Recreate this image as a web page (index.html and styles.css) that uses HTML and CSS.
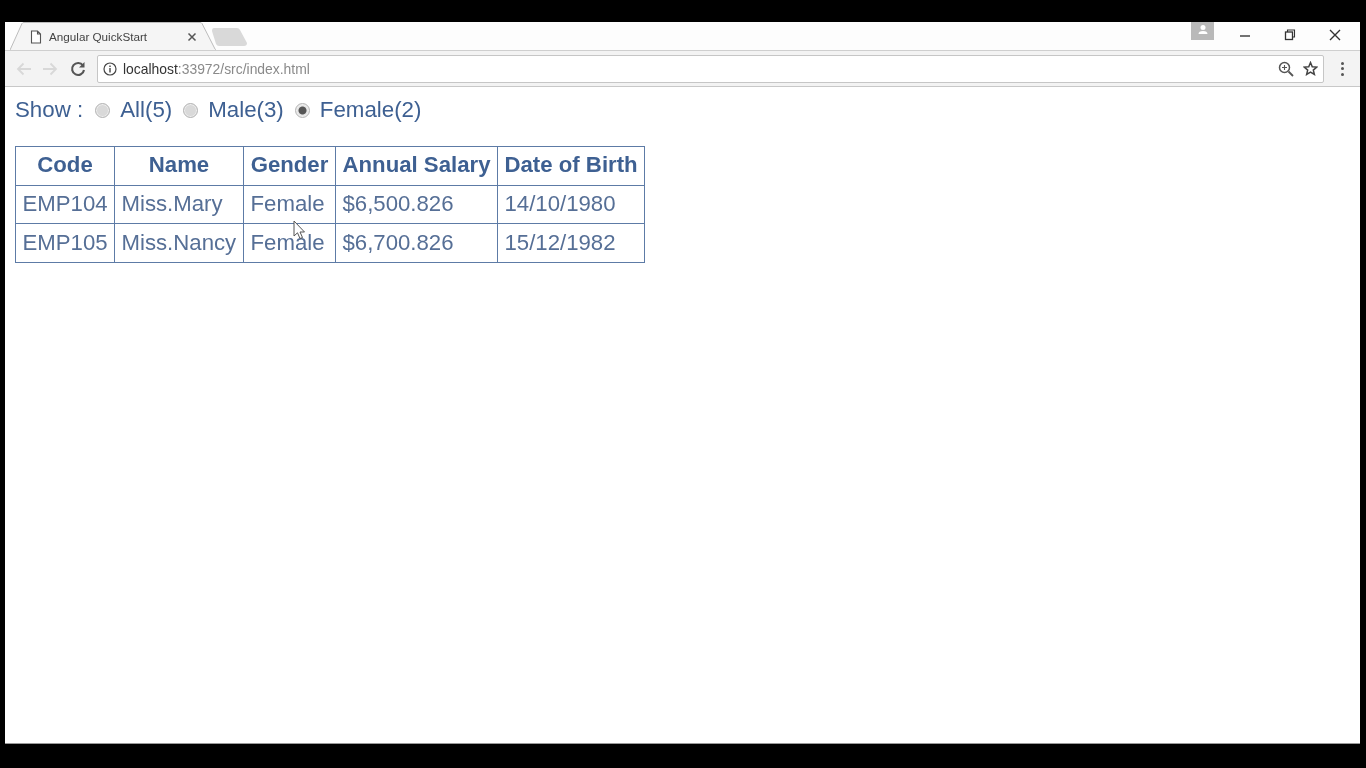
FILE: index.html
```html
<!DOCTYPE html>
<html lang="en">
<head>
<meta charset="utf-8">
<title>Angular QuickStart</title>
<link rel="stylesheet" href="styles.css">
</head>
<body>
<div class="window">
  <div class="tabstrip">
    <div class="tab">
      <svg class="tab-shape" width="206" height="29" viewBox="0 0 206 29"><path d="M0 28 L12 1.500 Q12.500 .5 14 .5 L190 .5 Q191.500 .5 192 1.500 L205 27 Q205.500 28 207 28" fill="#f5f5f5" stroke="#bcbcbc"/></svg>
      <svg class="tab-icon" width="12" height="14" viewBox="0 0 12 14"><path d="M1.500 1 H7.500 L10.500 4 V13 H1.500 Z M7.500 1 V4 H10.500" fill="#fff" stroke="#555" stroke-width="1.100"/></svg>
      <span class="tab-title">Angular QuickStart</span>
      <svg class="tab-close" width="10" height="10" viewBox="0 0 10 10"><path d="M1.500 1.500 L8.500 8.500 M8.500 1.500 L1.500 8.500" stroke="#555" stroke-width="1.500"/></svg>
    </div>
    <svg class="newtab" width="35" height="18" viewBox="0 0 35 18"><path d="M2 0 H25 Q27 0 28 2 L35 15 Q35 18 32 18 H7 Q5 18 4 16 L0 3 Q0 0 2 0 Z" fill="#d9d9d9"/></svg>
    <div class="spacer"></div>
    <div class="avatar">
      <svg width="12" height="12" viewBox="0 0 12 12"><circle cx="6" cy="3.500" r="2.500" fill="#fff"/><path d="M1.500 10 Q1.500 7 6 7 Q10.500 7 10.500 10 Z" fill="#fff"/></svg>
    </div>
    <div class="winctl">
      <svg width="12" height="12" viewBox="0 0 12 12"><path d="M1 7 H11" stroke="#444" stroke-width="1.500"/></svg>
    </div>
    <div class="winctl">
      <svg width="12" height="12" viewBox="0 0 12 12"><path d="M3.500 3 V1 H10.500 V8 H8.500" fill="none" stroke="#333" stroke-width="1.100"/><rect x="1.500" y="3" width="7" height="7.500" fill="none" stroke="#333" stroke-width="1.300"/></svg>
    </div>
    <div class="winctl">
      <svg width="12" height="12" viewBox="0 0 12 12"><path d="M1 1 L11 11 M11 1 L1 11" stroke="#333" stroke-width="1.400"/></svg>
    </div>
  </div>
  <div class="toolbar">
    <svg class="navbtn" width="16" height="14" viewBox="0 0 16 14"><path d="M15 7 H2 M7.500 1.500 L2 7 L7.500 12.500" fill="none" stroke="#d8d8d8" stroke-width="1.800"/></svg>
    <svg class="navbtn" width="16" height="14" viewBox="0 0 16 14"><path d="M1 7 H14 M8.500 1.500 L14 7 L8.500 12.500" fill="none" stroke="#d8d8d8" stroke-width="1.800"/></svg>
    <svg class="reload" width="16" height="16" viewBox="0 0 16 16"><path d="M13 4.500 A6 6 0 1 0 14 9" fill="none" stroke="#555" stroke-width="2.100"/><path d="M14.500 1 V6.500 H9 Z" fill="#555"/></svg>
    <div class="omnibox">
      <svg class="info" width="14" height="14" viewBox="0 0 14 14"><circle cx="7" cy="7" r="6" fill="none" stroke="#444" stroke-width="1.200"/><path d="M7 6 V10.500 M7 3.500 V5" stroke="#444" stroke-width="1.400"/></svg>
      <span class="url"><span class="host">localhost</span>:33972/src/index.html</span>
      <svg class="zoomicon" width="16" height="16" viewBox="0 0 16 16"><circle cx="6.500" cy="6.500" r="5" fill="none" stroke="#555" stroke-width="1.500"/><path d="M10.500 10.500 L15 15" stroke="#555" stroke-width="1.800"/><path d="M4 6.500 H9 M6.500 4 V9" stroke="#555" stroke-width="1.100"/></svg>
      <svg class="star" width="15" height="15" viewBox="0 0 24 24"><path d="M12 2.500 L14.800 9.200 L22 9.800 L16.500 14.500 L18.200 21.500 L12 17.800 L5.800 21.500 L7.500 14.500 L2 9.800 L9.200 9.200 Z" fill="none" stroke="#444" stroke-width="2.400"/></svg>
    </div>
    <div class="menu"><i></i><i></i><i></i></div>
  </div>
  <main class="page">
    <div class="filter">
      <span class="filter-label">Show :</span>
      <label class="opt"><span class="radio"></span>All(5)</label>
      <label class="opt"><span class="radio"></span>Male(3)</label>
      <label class="opt"><span class="radio checked"></span>Female(2)</label>
    </div>
    <table class="grid">
      <colgroup><col class="c1"><col class="c2"><col class="c3"><col class="c4"><col class="c5"></colgroup>
      <thead>
        <tr><th>Code</th><th>Name</th><th>Gender</th><th>Annual Salary</th><th>Date of Birth</th></tr>
      </thead>
      <tbody>
        <tr><td>EMP104</td><td>Miss.Mary</td><td>Female</td><td>$6,500.826</td><td>14/10/1980</td></tr>
        <tr><td>EMP105</td><td>Miss.Nancy</td><td>Female</td><td>$6,700.826</td><td>15/12/1982</td></tr>
      </tbody>
    </table>
    <svg class="cursor" width="13" height="20" viewBox="0 0 13 20"><path d="M1 1 V16 L4.500 12.800 L7 18.500 L9.500 17.500 L7 12 H11.500 Z" fill="#fff" stroke="#555" stroke-width="1"/></svg>
  </main>
</div>
</body>
</html>
```
FILE: styles.css
```css
* { box-sizing: border-box; }
html, body { margin: 0; height: 100%; }
body {
  background: #000;
  padding: 22px 6px 24px 5px;
  font-family: "Liberation Sans", Arial, sans-serif;
  overflow: hidden;
}
.window {
  height: 100%;
  background: #fff;
  display: flex;
  flex-direction: column;
  border-bottom: 1px solid #999;
  filter: blur(0.4px);
}
.tabstrip {
  height: 28px;
  display: flex;
  align-items: flex-start;
  background: #fdfdfd;
  padding: 0 3px 0 5px;
  flex: none;
}
.tab {
  position: relative;
  width: 205px;
  height: 28px;
  display: flex;
  align-items: center;
  padding: 0 18px 0 20px;
  flex: none;
}
.tab-shape { position: absolute; left: 0; top: 0; }
.tab-icon, .tab-title, .tab-close { position: relative; }
.tab-icon { margin-top: 2px; }
.tab-title {
  margin-left: 7px;
  font-size: 11.700px;
  color: #444;
  flex: 1;
  padding-top: 1px;
  white-space: nowrap;
}
.tab-close { margin-top: 1px; }
.newtab { margin: 6px 0 0 -3px; flex: none; }
.spacer { flex: 1; }
.avatar {
  width: 23px;
  height: 18px;
  background: #b9b9b9;
  display: flex;
  align-items: flex-start;
  justify-content: center;
  padding-top: 2px;
  margin-right: 8px;
}
.winctl {
  width: 45px;
  height: 26px;
  display: flex;
  align-items: center;
  justify-content: center;
}
.toolbar {
  height: 37px;
  flex: none;
  background: #f3f3f3;
  border-top: 1px solid #cfcfcf;
  border-bottom: 1px solid #c8c8c8;
  display: flex;
  align-items: center;
  padding: 0 6px 0 11px;
}
.navbtn { margin-right: 10px; flex: none; }
.reload { margin-left: 2px; margin-right: 11px; flex: none; }
.omnibox {
  flex: 1;
  height: 28px;
  background: #fff;
  border: 1px solid #c6c6c6;
  border-radius: 2px;
  display: flex;
  align-items: center;
  padding: 0 5px;
}
.info { flex: none; }
.url {
  margin-left: 6px;
  font-size: 13.900px;
  color: #8a8a8a;
  flex: 1;
  white-space: nowrap;
}
.host { color: #333; }
.zoomicon { margin-right: 9px; flex: none; }
.star { flex: none; }
.menu {
  width: 30px;
  display: flex;
  flex-direction: column;
  align-items: center;
  gap: 2.500px;
  flex: none;
  padding-left: 6px;
}
.menu i {
  display: block;
  width: 3px;
  height: 3px;
  border-radius: 50%;
  background: #555;
}
.page {
  position: relative;
  flex: 1;
  padding: 9px 10px;
  color: #3e6092;
}
.filter {
  display: flex;
  align-items: center;
  height: 28px;
  font-size: 22.300px;
  white-space: nowrap;
}
.filter-label { margin-right: 12px; }
.opt { display: flex; align-items: center; margin-right: 11px; }
.radio {
  width: 15px;
  height: 15px;
  border-radius: 50%;
  border: 1px solid #b5b5b5;
  background: #d9d9d9;
  margin-right: 10px;
  box-shadow: inset 0 0 0 1px #eee;
}
.radio.checked {
  background: radial-gradient(circle, #555 0 3.500px, #e6e6e6 4.500px);
}
.grid {
  margin-top: 22px;
  border-collapse: collapse;
  table-layout: fixed;
  width: 629px;
  font-size: 22.200px;
  border: 1px solid #5d7ba6;
}
.c1 { width: 99px; }
.c2 { width: 129px; }
.c3 { width: 92px; }
.c4 { width: 162px; }
.c5 { width: 147px; }
.grid th, .grid td {
  border: 1px solid #5d7ba6;
  padding: 0 6.500px;
  height: 38.500px;
  text-align: left;
  white-space: nowrap;
}
.grid th { text-align: center; font-weight: bold; padding-bottom: 2px; }
.grid td { color: #566f96; }
.cursor { position: absolute; left: 288px; top: 133px; }
```
